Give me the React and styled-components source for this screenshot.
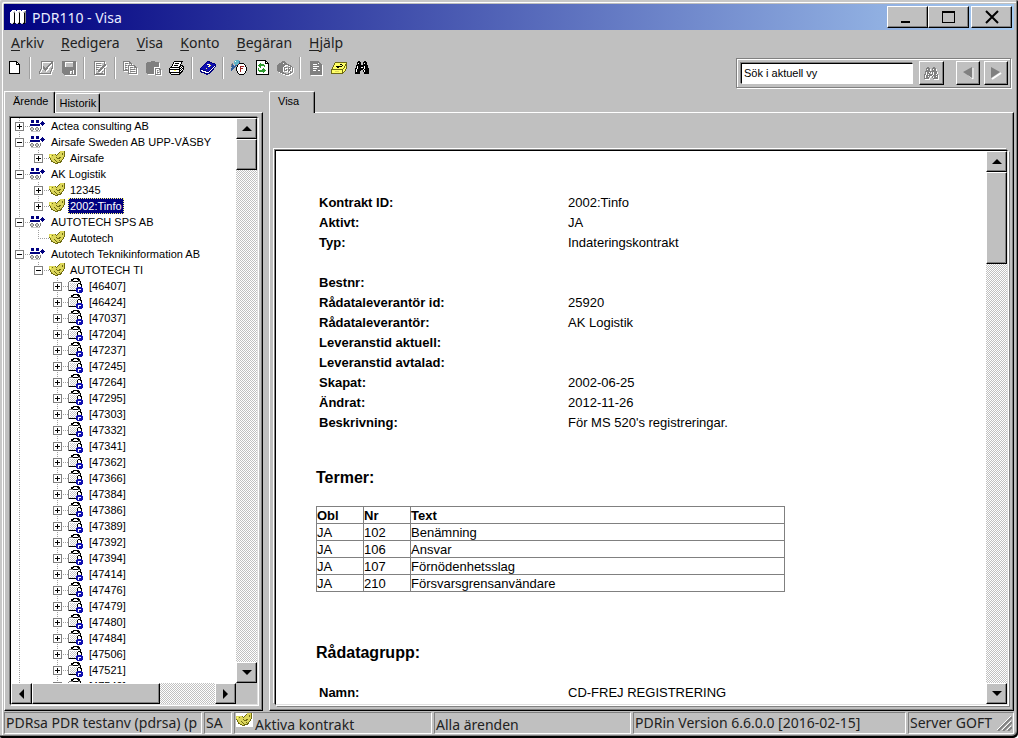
import React, { useState } from "react";
import styled, { createGlobalStyle, css } from "styled-components";

const PALETTE = {
  k: "#000000",
  w: "#ffffff",
  g: "#808080",
  s: "#c8c8c8",
  n: "#000080",
  b: "#1010b0",
  y: "#dcd65a",
  Y: "#ffff66",
  o: "#6e6a12",
  c: "#5fb4c8",
  d: "#2f5f9c",
  G: "#2f9a2f",
  r: "#a02020",
};

const ART = {
  app: [
    "..wwww.wwww.wwww",
    ".wwwswwwwswwwwsg",
    "wwwsgwwwsgwwwsgg",
    "wwwwkwwwwkwwwwkg",
    "wwwwkwwwwkwwwwkg",
    "wwwwkwwwwkwwwwkg",
    "wwwwkwwwwkwwwwkg",
    "wwwwkwwwwkwwwwkg",
    "wwwwkwwwwkwwwwkg",
    "wwwwkwwwwkwwwwkg",
    "wwwwkwwwwkwwwwkg",
    "wwwwkwwwwkwwwwkg",
    "wwwskwwwskwwwskg",
    ".sskk.sskk.sskk.",
  ],
  page: [
    "kkkkkkkk....",
    "kwwwwwwkk...",
    "kwwwwwwkwk..",
    "kwwwwwwkkkk.",
    "kwwwwwwwwwk.",
    "kwwwwwwwwwk.",
    "kwwwwwwwwwk.",
    "kwwwwwwwwwk.",
    "kwwwwwwwwwk.",
    "kwwwwwwwwwk.",
    "kwwwwwwwwwk.",
    "kwwwwwwwwwk.",
    "kkkkkkkkkkk.",
  ],
  check: [
    "..gggggggggggg",
    "..g.........gg",
    "..g........ggg",
    "..g.......gg.g",
    "..g......gg..g",
    "..g.g...gg...g",
    "..g.gg.gg....g",
    "..g.ggggg...gg",
    ".g...ggg....g.",
    ".g....g.....g.",
    "g..........g..",
    "g..........g..",
    "gggggggggggg..",
  ],
  save: [
    "gggggggggggggg",
    "ggg........ggg",
    "ggg........ggg",
    "ggg........ggg",
    "ggg........ggg",
    "ggg........ggg",
    "gggggggggggggg",
    "gggggggggggggg",
    "gggggggggggggg",
    "ggggggggggg.gg",
    "gggggggg..g.gg",
    "gggggggg..g.gg",
    ".ggggggg..g.gg",
    "..gggggggggggg",
  ],
  edit: [
    "ggggggggggg.",
    "g.........g.",
    "g.ggggg...g.",
    "g.........gg",
    "g.ggggg..ggg",
    "g.......ggg.",
    "g.ggg..ggg..",
    "g.....ggg.g.",
    "g.gg.ggg..g.",
    "g...ggg...g.",
    "g...gg..g.g.",
    "g.........g.",
    "g.ggggggg.g.",
    "ggggggggggg.",
  ],
  copy: [
    "ggggggg.........",
    "g.....gg........",
    "g.ggg.ggg.......",
    "g.......g.......",
    "g.gg.ggggggg....",
    "g....g.....gg...",
    "g.gg.g.ggg.ggg..",
    "g....g.......g..",
    "g.gg.g.ggggg.g..",
    "gggggg.......g..",
    ".....g.ggggg.g..",
    ".....g.......g..",
    ".....ggggggggg..",
  ],
  paste: [
    ".....gggg.......",
    ".gggggggggggg...",
    "ggggggggggggg...",
    "ggggggggggggg...",
    "ggggggggggggg...",
    "ggggggggggggg...",
    "gggggggg........",
    "gggggggg.ggggg..",
    "gggggggg.g...gg.",
    "gggggggg.g.g..g.",
    "gggggggg.g....g.",
    "gggggggg.g.gg.g.",
    ".ggggggg.g....g.",
    ".........gggggg.",
  ],
  print: [
    ".....kkkkkkkkk..",
    "....kwwwwwwwk...",
    "....kwkkkkwwk...",
    "...kwwwwwwwk....",
    "...kwkkkkwwkkk..",
    "..kwwwwwwwkkwkk.",
    ".kkkkkkkkkkwkwk.",
    "kwwwwwwwwwkkwkk.",
    "kkkkkkkkkkkwkwk.",
    "kwwwwYYwwwkkwk..",
    "kwwwwwwwwwkwkk..",
    "kkkkkkkkkkkkk...",
    ".kwwwwwwwwkk....",
    "..kkkkkkkkk.....",
  ],
  book: [
    ".......nnn......",
    "......nbbnnn....",
    ".....nbbbbbbnnn.",
    "....nbbwwYbbbbbn",
    "...nbbbbbwYbbbnn",
    "..nbbbbbwYbbbnwn",
    ".nbbbbbbbbbbnwn.",
    "nbbbbbYbbbbnwn..",
    "nnnbbbbbbbnwnn..",
    "nwwnnnbbbnwnn...",
    "nnwwwwnnnwnn....",
    ".nnnnwwwwnn.....",
    "....nnnnnn......",
    "......nn........",
  ],
  findForm: [
    "....cccc........",
    "...cwcccd.......",
    "...cccccd.......",
    ".g.ccccckkkkk...",
    "gd..cccrwwwwwk..",
    "gdd.ddkwwwwwwwk.",
    "ddddd.kwwrrrrwk.",
    ".ddd.kwwwrwwwwwk",
    "ddd..kwwwrrrwwwk",
    "dd...kwwwrwwwwwk",
    "d....kwwwrwwwwwk",
    "......kwwrwwwwk.",
    "......kwwwwwwwk.",
    ".......kwwwwwk..",
    "........kkkkk...",
  ],
  refresh: [
    "kkkkkkkkkk...",
    "kwwwwwwwwkk..",
    "kwwwwwwwwkwk.",
    "kwwwGwwwwkkkk",
    "kwwGGGGGwwwwk",
    "kwGGGGGGGwwwk",
    "kwwGGwwwGwwwk",
    "kwwwGwwwwwwwk",
    "kwGwwwwGwwwwk",
    "kwGwwwGGGwwwk",
    "kwGGGGGGGGwwk",
    "kwwGGGGGGwwwk",
    "kwwwwwwGwwwwk",
    "kwwwwwwwwwwwk",
    "kkkkkkkkkkkkk",
  ],
  request: [
    ".....ggg........",
    "....ggggg.......",
    "..gggg.ggg......",
    ".ggggggggggg....",
    "gggggggg...ggg..",
    "ggggggg......gg.",
    "gggggg.ggg.ggg.g",
    "gggggg.g...g.g.g",
    "gggggg.g.g.ggg.g",
    "gggggg.ggg.gg..g",
    ".ggggg.....g.g.g",
    "...gggg......gg.",
    ".....gggg..ggg..",
    "........gggg....",
  ],
  report: [
    "ggggggggg...",
    "gggggggggg..",
    "gggggggg.gg.",
    "ggg....ggggg",
    "gggggggggggg",
    "ggg......ggg",
    "gggggggggggg",
    "ggg....ggggg",
    "gggggggggggg",
    "ggg...gg..gg",
    "gggggggggggg",
    "gggggggggggg",
    "gggggggggggg",
    "gggggggggggg",
  ],
  card: [
    "....oooooooooooo",
    "...oYYYYYYYYYYYo",
    "...oYYYYYkkYYYoo",
    "..oYYYYYYYYkYYoo",
    "..oYYkkkkkkYYoYo",
    ".oYYYYkkYYYYYoYo",
    ".oYYYYYYYYYYoYYo",
    "ooooooooooooYYo.",
    "oYYYYYYYYYYoYYo.",
    "oYYYyyyyYYYoYo..",
    "oYYYYYYYYYYoo...",
    "oooooooooooo....",
  ],
  binoculars: [
    "...kk....kk....",
    "..kkkk..kkkk...",
    "..kwkk..kwkk...",
    "..kkkk..kkkk...",
    ".kkkkkkkkkkkk..",
    ".kwkkkkkkwkkk..",
    ".kwkkkwwkwkkk..",
    "kkwkkkkkkwkkkk.",
    "kwkkkkkkwkkkkk.",
    "kwkkkk..kwkkkk.",
    "kwkkk...kwkkkk.",
    "kkkkk....kkkkk.",
    "kkkkk....kkkkk.",
  ],
  binocularsOff: [
    "...gg....gg....",
    "..gggg..gggg...",
    "..g.gg..g.gg...",
    "..gggg..gggg...",
    ".gggggggggggg..",
    ".g.gg.g.g.ggg..",
    ".g.ggg..g.ggg..",
    "gg.g.gggg.gg.g.",
    "g.gggggg.ggggg.",
    "g.gg.g..g.gg.g.",
    "g.ggg...g.gggg.",
    "ggggg....ggggg.",
  ],
  company: [
    ".nnn..nnn.......",
    ".nnn..nnn...n...",
    ".nnn..nnn..nnn..",
    "..........nnnnn.",
    "nnnnnnnnnn.nnn..",
    "nnnnnnnnnn..n...",
    "................",
    ".gg...gg..g.....",
    "gssg.gssg.g.....",
    "gssg.gssg.g.....",
    ".gg...gg.g......",
    ".sssssssss......",
  ],
  contract: [
    "...........yyyyo",
    "..........oyyyyo",
    ".........oyyyoyo",
    "yyyyyyo.oyyyyoyo",
    "yYyoyyyoyyyyyyyo",
    "yYyyyyyyyyyyyyyo",
    "oyyyyyyoyyooyyo.",
    ".oyyyyyyoooyyyo.",
    ".oyyyoyyyyyyyo..",
    "..oyyyoyyyoyo...",
    "..ooyyyoyyyoo...",
    "....ooyyoooo....",
    "......ooo.......",
  ],
  caseLocked: [
    ".....kkkkkk.....",
    "...kkkwwwkkk....",
    "...kk.....kk....",
    ".ggggkkkkkggk...",
    "gwwwwwwwwwwwk...",
    "gwswswswswkkk...",
    "gwwswswswkwwkk..",
    "gwswswswskwwwk..",
    "gwwswswswkwwwk..",
    "gwswswswsbbbbb..",
    "gwwswswsbbbbbbb.",
    "gwswswswbbwwwbb.",
    "gkkkkkkkbbwbbbb.",
    "........bbwbbbb.",
    ".........bbbbb..",
  ],
};

function runs(rows) {
  const out = [];
  rows.forEach((row, y) => {
    let x = 0;
    while (x < row.length) {
      let end = x + 1;
      while (end < row.length && row[end] === row[x]) end += 1;
      if (row[x] !== ".") out.push({ x, y, w: end - x, c: PALETTE[row[x]] });
      x = end;
    }
  });
  return out;
}

const PixelArt = ({ name, embossed }) => {
  const rows = ART[name];
  const cells = runs(rows);
  const w = rows[0].length + 1;
  const h = rows.length + 1;
  return (
    <svg width={w} height={h} viewBox={`0 0 ${w} ${h}`} shapeRendering="crispEdges" aria-hidden="true">
      {embossed &&
        cells.map((r) => (
          <rect key={`w${r.x}-${r.y}`} x={r.x + 1} y={r.y + 1} width={r.w} height="1" fill="#fff" />
        ))}
      {cells.map((r) => (
        <rect key={`${r.x}-${r.y}`} x={r.x} y={r.y} width={r.w} height="1" fill={r.c} />
      ))}
    </svg>
  );
};

const ARROWS = {
  up: "M0 5 L5 0 L10 5 Z",
  down: "M0 0 L10 0 L5 5 Z",
  left: "M5 0 L5 10 L0 5 Z",
  right: "M0 0 L5 5 L0 10 Z",
};

const Arrow = ({ dir }) => {
  const flat = dir === "up" || dir === "down";
  return (
    <svg width={flat ? 10 : 5} height={flat ? 5 : 10} aria-hidden="true">
      <path d={ARROWS[dir]} fill="#000" />
    </svg>
  );
};

const MENU = ["Arkiv", "Redigera", "Visa", "Konto", "Begäran", "Hjälp"];

const TOOLS = [
  [{ icon: "page", label: "Ny" }],
  [
    { icon: "check", label: "Godkänn", off: true },
    { icon: "save", label: "Spara", off: true },
  ],
  [{ icon: "edit", label: "Ändra", off: true }],
  [
    { icon: "copy", label: "Kopiera", off: true },
    { icon: "paste", label: "Klistra in", off: true },
    { icon: "print", label: "Skriv ut" },
  ],
  [{ icon: "book", label: "Handbok" }],
  [
    { icon: "findForm", label: "Sök F" },
    { icon: "refresh", label: "Uppdatera" },
    { icon: "request", label: "Begäran GR", off: true },
  ],
  [
    { icon: "report", label: "Rapport", off: true },
    { icon: "card", label: "Kort" },
    { icon: "binoculars", label: "Sök" },
  ],
];

const CASES = [
  46407, 46424, 47037, 47204, 47237, 47245, 47264, 47295, 47303, 47332, 47341, 47362, 47366,
  47384, 47386, 47389, 47392, 47394, 47414, 47476, 47479, 47480, 47484, 47506, 47521, 47549,
];

const TREE = [
  { name: "Actea consulting AB", icon: "company", box: "+" },
  {
    name: "Airsafe Sweden AB UPP-VÄSBY",
    icon: "company",
    box: "-",
    items: [{ name: "Airsafe", icon: "contract", box: "+" }],
  },
  {
    name: "AK Logistik",
    icon: "company",
    box: "-",
    items: [
      { name: "12345", icon: "contract", box: "+" },
      { name: "2002:Tinfo", icon: "contract", box: "+" },
    ],
  },
  {
    name: "AUTOTECH SPS AB",
    icon: "company",
    box: "-",
    items: [{ name: "Autotech", icon: "contract" }],
  },
  {
    name: "Autotech Teknikinformation AB",
    icon: "company",
    box: "-",
    more: true,
    items: [
      {
        name: "AUTOTECH TI",
        icon: "contract",
        box: "-",
        items: CASES.map((id) => ({ name: `[${id}]`, icon: "caseLocked", box: "+" })),
      },
    ],
  },
];

const CONTRACT = [
  ["Kontrakt ID:", "2002:Tinfo"],
  ["Aktivt:", "JA"],
  ["Typ:", "Indateringskontrakt"],
  null,
  ["Bestnr:", ""],
  ["Rådataleverantör id:", "25920"],
  ["Rådataleverantör:", "AK Logistik"],
  ["Leveranstid aktuell:", ""],
  ["Leveranstid avtalad:", ""],
  ["Skapat:", "2002-06-25"],
  ["Ändrat:", "2012-11-26"],
  ["Beskrivning:", "För MS 520's registreringar."],
];

const TERMS = [
  ["JA", "102", "Benämning"],
  ["JA", "106", "Ansvar"],
  ["JA", "107", "Förnödenhetsslag"],
  ["JA", "210", "Försvarsgrensanvändare"],
];

function flatten(nodes, guides = []) {
  return nodes.flatMap((node, i) => {
    const last = i === nodes.length - 1 && !node.more;
    const row = { ...node, guides, last };
    return [row, ...flatten(node.items || [], [...guides, !last])];
  });
}

const ScrollBar = ({ horizontal, size }) => (
  <Track $horizontal={horizontal}>
    <ScrollButton type="button" aria-label={horizontal ? "Vänster" : "Upp"}>
      <Arrow dir={horizontal ? "left" : "up"} />
    </ScrollButton>
    <Rail $horizontal={horizontal}>
      <Thumb $size={size} />
    </Rail>
    <ScrollButton type="button" aria-label={horizontal ? "Höger" : "Ned"}>
      <Arrow dir={horizontal ? "right" : "down"} />
    </ScrollButton>
  </Track>
);

const Tree = () => {
  const [selected, setSelected] = useState("2002:Tinfo");
  return (
    <TreeList role="tree" aria-label="Ärenden">
      {flatten(TREE).map((row) => (
        <TreeRow key={row.name} role="treeitem" aria-level={row.guides.length + 1}>
          {row.guides.map((open, i) => (
            <Guide key={i} $line={open ? "full" : "none"} />
          ))}
          <Guide $line={row.last ? "half" : "full"} $branch>
            {row.box && (
              <Expander type="button" aria-label={row.box === "+" ? "Expandera" : "Fäll ihop"}>
                <svg width="7" height="7" shapeRendering="crispEdges" aria-hidden="true">
                  <rect x="1" y="3" width="5" height="1" />
                  {row.box === "+" && <rect x="3" y="1" width="1" height="5" />}
                </svg>
              </Expander>
            )}
          </Guide>
          <TreeIcon>
            <PixelArt name={row.icon} />
          </TreeIcon>
          <TreeLabel
            type="button"
            $selected={row.name === selected}
            onClick={() => setSelected(row.name)}
          >
            {row.name}
          </TreeLabel>
        </TreeRow>
      ))}
    </TreeList>
  );
};

const App = () => {
  const [query, setQuery] = useState("Sök i aktuell vy");

  return (
    <>
      <GlobalStyle />
      <Window>
        <TitleBar>
          <PixelArt name="app" />
          <Title>PDR110 - Visa</Title>
          <WindowButton type="button" aria-label="Minimera">
            <svg width="14" height="14" shapeRendering="crispEdges" aria-hidden="true">
              <rect x="0" y="11" width="9" height="2" />
            </svg>
          </WindowButton>
          <WindowButton type="button" aria-label="Maximera">
            <svg width="14" height="14" shapeRendering="crispEdges" aria-hidden="true">
              <path d="M0 1h13v12h-13z M1 3v9h11v-9z" fillRule="evenodd" />
            </svg>
          </WindowButton>
          <WindowButton type="button" aria-label="Stäng" $apart>
            <svg width="14" height="14" aria-hidden="true">
              <path d="M1 1 L13 13 M13 1 L1 13" stroke="#000" strokeWidth="2" />
            </svg>
          </WindowButton>
        </TitleBar>

        <MenuBar>
          {MENU.map((item) => (
            <MenuItem key={item} type="button">
              <u>{item[0]}</u>
              {item.slice(1)}
            </MenuItem>
          ))}
        </MenuBar>

        <ToolRow>
          <ToolBar role="toolbar">
            {TOOLS.map((group) => (
              <ToolGroup key={group[0].icon}>
                {group.map((tool) => (
                  <ToolButton key={tool.icon} type="button" aria-label={tool.label} disabled={tool.off}>
                    <PixelArt name={tool.icon} embossed={tool.off} />
                  </ToolButton>
                ))}
              </ToolGroup>
            ))}
          </ToolBar>
          <SearchBox>
            <SearchInput
              type="text"
              aria-label="Sök i aktuell vy"
              value={query}
              onChange={(e) => setQuery(e.target.value)}
            />
            <SearchButton type="button" aria-label="Sök" disabled>
              <PixelArt name="binocularsOff" embossed />
            </SearchButton>
            <Stepper>
              <StepButton type="button" aria-label="Föregående" disabled>
                <svg width="12" height="14" aria-hidden="true">
                  <path d="M11 2 V13 L6 9" fill="none" stroke="#fff" />
                  <path d="M10 1 V12 L1 6 Z" fill="#808080" />
                </svg>
              </StepButton>
              <StepButton type="button" aria-label="Nästa" disabled>
                <svg width="12" height="14" aria-hidden="true">
                  <path d="M2 13 L11 7" fill="none" stroke="#fff" strokeWidth="2" />
                  <path d="M1 1 V12 L10 6 Z" fill="#808080" />
                </svg>
              </StepButton>
            </Stepper>
          </SearchBox>
        </ToolRow>

        <Main>
          <Sidebar>
            <Tabs role="tablist">
              <Tab type="button" role="tab" aria-selected="true" $active>
                Ärende
              </Tab>
              <Tab type="button" role="tab" aria-selected="false">
                Historik
              </Tab>
            </Tabs>
            <SidePage>
              <Sunken>
                <Column>
                  <Tree />
                  <ScrollBar horizontal size={70} />
                </Column>
                <Column $narrow>
                  <ScrollBar size={6} />
                  <Corner />
                </Column>
              </Sunken>
            </SidePage>
          </Sidebar>

          <Content>
            <Tabs role="tablist">
              <Tab type="button" role="tab" aria-selected="true" $active $wide>
                Visa
              </Tab>
            </Tabs>
            <ViewPage>
              <Sunken $framed>
                <Document>
                  <Fields>
                    {CONTRACT.map((field, i) =>
                      field ? (
                        <Field key={field[0]}>
                          <dt>{field[0]}</dt>
                          <dd>{field[1]}</dd>
                        </Field>
                      ) : (
                        <Field key={i} />
                      )
                    )}
                  </Fields>
                  <Heading>Termer:</Heading>
                  <TermTable>
                    <thead>
                      <tr>
                        <th>Obl</th>
                        <th>Nr</th>
                        <th>Text</th>
                      </tr>
                    </thead>
                    <tbody>
                      {TERMS.map((term) => (
                        <tr key={term[1]}>
                          {term.map((cell) => (
                            <td key={cell}>{cell}</td>
                          ))}
                        </tr>
                      ))}
                    </tbody>
                  </TermTable>
                  <Heading $far>Rådatagrupp:</Heading>
                  <Fields>
                    <Field>
                      <dt>Namn:</dt>
                      <dd>CD-FREJ REGISTRERING</dd>
                    </Field>
                  </Fields>
                </Document>
                <Column $narrow>
                  <ScrollBar size={18} />
                </Column>
              </Sunken>
            </ViewPage>
          </Content>
        </Main>

        <StatusBar>
          <StatusCell $size={198}>PDRsa PDR testanv (pdrsa) (p</StatusCell>
          <StatusCell $size={28}>SA</StatusCell>
          <StatusCell $size={198} $low>
            <StatusIcon>
              <PixelArt name="contract" />
            </StatusIcon>
            Aktiva kontrakt
          </StatusCell>
          <StatusCell $size={197} $low>
            Alla ärenden
          </StatusCell>
          <StatusCell $size={273}>PDRin Version 6.6.0.0 [2016-02-15]</StatusCell>
          <StatusCell $size={106} $grip>
            <span>Server GOFT</span>
            <svg width="15" height="15" aria-hidden="true">
              <path d="M1 15 L15 1 M6 15 L15 6 M11 15 L15 11" stroke="#808080" strokeWidth="2" />
              <path d="M0 14 L14 0 M5 14 L14 5 M10 14 L14 10" stroke="#fff" />
            </svg>
          </StatusCell>
        </StatusBar>
      </Window>
    </>
  );
};

export default App;

const GlobalStyle = createGlobalStyle`
  * {
    box-sizing: border-box;
  }

  body {
    margin: 0;
    background: #fff;
    color: #000;
    font-family: "Liberation Sans", Arial, sans-serif;
    font-size: 11px;
  }

  button, input {
    margin: 0;
    padding: 0;
    border: 0;
    border-radius: 0;
    background: none;
    color: inherit;
    font: inherit;
  }

  svg {
    display: block;
    flex: none;
  }
`;

const raised = css`
  background: #c0c0c0;
  border: 1px solid;
  border-color: #fff #000 #000 #fff;
  box-shadow: inset -1px -1px 0 #808080;
`;

const Window = styled.div`
  display: flex;
  flex-direction: column;
  height: 100vh;
  padding: 4px;
  overflow: hidden;
  background: #c0c0c0;
  border-radius: 2px 2px 5px 2px;
  box-shadow: inset -1px -2px 0 #000, inset -2px -3px 0 #808080, inset 2px 2px 0 #c8c8c8,
    inset 3px 3px 0 #fff;
`;

const TitleBar = styled.header`
  display: flex;
  align-items: center;
  flex: none;
  height: 26px;
  padding: 0 2px 0 6px;
  background: linear-gradient(90deg, #000080, #a6caf0);
`;

const Title = styled.h1`
  flex: 1;
  margin: 0 0 0 5px;
  color: #e8ecff;
  font-family: "Noto Sans", "Open Sans", sans-serif;
  font-size: 14px;
  font-weight: 400;
`;

const WindowButton = styled.button`
  ${raised}
  display: flex;
  align-items: center;
  justify-content: center;
  width: 41px;
  height: 22px;
  margin-left: ${({ $apart }) => ($apart ? "2px" : "0")};
`;

const MenuBar = styled.nav`
  display: flex;
  align-items: center;
  flex: none;
  gap: 17px;
  height: 26px;
  padding-left: 7px;
`;

const MenuItem = styled.button`
  color: #222;
  font-family: "Noto Sans", "Open Sans", sans-serif;
  font-size: 14px;
  line-height: 20px;

  u {
    text-underline-offset: 2px;
  }
`;

const ToolRow = styled.div`
  display: flex;
  align-items: flex-start;
  justify-content: space-between;
  flex: none;
  height: 35px;
  padding: 1px 3px 0 0;
`;

const ToolBar = styled.div`
  display: flex;
`;

const ToolGroup = styled.div`
  display: flex;

  & + & {
    padding-left: 4px;
    margin-left: 3px;
    border-left: 1px solid #fff;
    box-shadow: -1px 0 0 #a0a0a0;
  }
`;

const ToolButton = styled.button`
  display: flex;
  align-items: center;
  justify-content: center;
  width: 23px;
  height: 22px;
`;

const SearchBox = styled.form`
  display: flex;
  align-items: center;
  height: 30px;
  margin-top: 1px;
  padding: 0 2px 0 4px;
  border: 1px solid #808080;
  box-shadow: inset 1px 1px 0 #fff, 1px 1px 0 #fff;
`;

const SearchInput = styled.input`
  width: 172px;
  height: 21px;
  padding: 0 2px;
  background: #fff;
  border: 1px solid;
  border-color: #000 #fff #fff #000;
  box-shadow: -1px -1px 0 #808080;
  font-size: 11px;
`;

const SearchButton = styled.button`
  ${raised}
  display: flex;
  align-items: center;
  justify-content: center;
  width: 25px;
  height: 24px;
  margin-left: 6px;
`;

const Stepper = styled.div`
  display: flex;
  gap: 4px;
  margin-left: 12px;
`;

const StepButton = styled(SearchButton)`
  width: 24px;
  margin-left: 0;
`;

const Main = styled.main`
  display: flex;
  flex: 1;
  gap: 6px;
  min-height: 0;
`;

const Panel = styled.section`
  display: flex;
  flex-direction: column;
  min-width: 0;
`;

const Sidebar = styled(Panel)`
  flex: 0 0 259px;
  box-shadow: inset 0 1px 0 #fff;
`;

const Content = styled(Panel)`
  flex: 1;
`;

const Tabs = styled.div`
  display: flex;
  align-items: flex-end;
  flex: none;
  height: 21px;
`;

const Tab = styled.button`
  height: ${({ $active }) => ($active ? "22px" : "19px")};
  margin-bottom: ${({ $active }) => ($active ? "-1px" : "0")};
  padding: ${({ $active }) => ($active ? "0 6px 3px 8px" : "0 3px")};
  padding-right: ${({ $wide }) => $wide && "15px"};
  background: #c0c0c0;
  border: 1px solid;
  border-color: #fff #000 transparent #fff;
  border-bottom: 0;
  box-shadow: inset -1px 0 0 #808080;
  border-radius: 2px 2px 0 0;
  z-index: 1;
`;

const Page = styled.div`
  display: flex;
  flex: 1;
  min-height: 0;
  border: 1px solid;
  border-color: #fff #000 #000 #fff;
  box-shadow: inset -1px -1px 0 #808080;
`;

const SidePage = styled(Page)`
  padding: 4px 4px 5px 5px;
`;

const ViewPage = styled(Page)`
  padding: 37px 5px 5px 5px;
`;

const Sunken = styled.div`
  display: flex;
  flex: 1;
  min-width: 0;
  background: #fff;
  border: 1px solid;
  border-color: #000 #e0e0e0 #e0e0e0 #000;
  box-shadow: ${({ $framed }) =>
    $framed
      ? "-1px -1px 0 #808080, 1px 1px 0 #fff, 2px 2px 0 #808080, -2px -2px 0 #fff"
      : "-1px -1px 0 #808080, 1px 1px 0 #fff"};
`;

const Column = styled.div`
  display: flex;
  flex: ${({ $narrow }) => ($narrow ? "none" : "1")};
  flex-direction: column;
  min-width: 0;
`;

const Corner = styled.div`
  height: 21px;
  background: #c0c0c0;
`;

const Track = styled.div`
  display: flex;
  flex: ${({ $horizontal }) => ($horizontal ? "none" : "1")};
  flex-direction: ${({ $horizontal }) => ($horizontal ? "row" : "column")};
  background: repeating-conic-gradient(#fff 0 25%, #c0c0c0 0 50%) 0 0 / 2px 2px;
`;

const ScrollButton = styled.button`
  ${raised}
  display: flex;
  align-items: center;
  justify-content: center;
  flex: none;
  width: 21px;
  height: 21px;
`;

const Rail = styled.div`
  display: flex;
  flex: 1;
  flex-direction: ${({ $horizontal }) => ($horizontal ? "row" : "column")};
`;

const Thumb = styled.div`
  ${raised}
  flex: 0 0 ${({ $size }) => $size}%;
`;

const TreeList = styled.ul`
  flex: 1;
  min-height: 0;
  margin: 0;
  padding: 0;
  overflow: hidden;
  list-style: none;
`;

const TreeRow = styled.li`
  display: flex;
  align-items: center;
  height: 16px;
`;

const dots = "#a0a0a0 0 1px, transparent 1px 2px";
const lineHeight = { full: "100%", half: "50%", none: "0" };

const Guide = styled.span`
  display: flex;
  align-items: center;
  flex: none;
  width: 19px;
  height: 16px;
  padding-left: 4px;
  background-image: repeating-linear-gradient(180deg, ${dots}),
    repeating-linear-gradient(90deg, ${dots});
  background-repeat: no-repeat;
  background-position: 8px 0, 8px 8px;
  background-size: 1px ${({ $line }) => lineHeight[$line]}, ${({ $branch }) => ($branch ? "11px" : "0")} 1px;
`;

const Expander = styled.button`
  width: 9px;
  height: 9px;
  background: #fff;
  border: 1px solid #808080;
`;

const TreeIcon = styled.span`
  display: flex;
  align-items: center;
  flex: none;
  width: 17px;
  height: 16px;
`;

const TreeLabel = styled.button`
  height: 16px;
  margin-left: 2px;
  padding: 0 1px;
  border: 1px dotted transparent;
  line-height: 14px;
  white-space: nowrap;

  ${({ $selected }) =>
    $selected &&
    css`
      background: #000080;
      border-color: #ffff7f;
      color: #fff;
    `}
`;

const Document = styled.article`
  flex: 1;
  min-width: 0;
  padding: 42px 40px 0;
  overflow: hidden;
  font-size: 13px;
`;

const Fields = styled.dl`
  margin: 0;
  padding-left: 3px;
`;

const Field = styled.div`
  display: flex;
  height: 20px;
  line-height: 20px;

  dt {
    flex: 0 0 249px;
    font-weight: 700;
  }

  dd {
    margin: 0;
  }
`;

const Heading = styled.h2`
  margin: ${({ $far }) => ($far ? "51px 0 20px" : "35px 0 18px")};
  font-size: 16px;
  line-height: 20px;
`;

const TermTable = styled.table`
  width: 469px;
  max-width: 100%;
  border-collapse: collapse;
  table-layout: fixed;
  line-height: 15px;

  th, td {
    padding: 1px 0 0;
    border: 1px solid #808080;
    text-align: left;
  }

  th:not(:last-child) {
    width: 47px;
  }
`;

const StatusBar = styled.footer`
  display: flex;
  flex: none;
  gap: 2px;
  height: 23px;
  padding-top: 1px;
  font-family: "Noto Sans", "Open Sans", sans-serif;
  font-size: 14px;
`;

const StatusCell = styled.div`
  display: flex;
  align-items: ${({ $low }) => ($low ? "flex-end" : "center")};
  justify-content: ${({ $grip }) => ($grip ? "space-between" : "flex-start")};
  flex: ${({ $size }) => `${$size} ${$size} ${$size}px`};
  min-width: 0;
  padding: 0 1px;
  overflow: hidden;
  border: 1px solid;
  border-color: #808080 #fff #fff #808080;
  color: #222;
  line-height: 16px;
  white-space: nowrap;
`;

const StatusIcon = styled.span`
  align-self: flex-start;
  margin-right: 2px;
  background: #fff;
`;
